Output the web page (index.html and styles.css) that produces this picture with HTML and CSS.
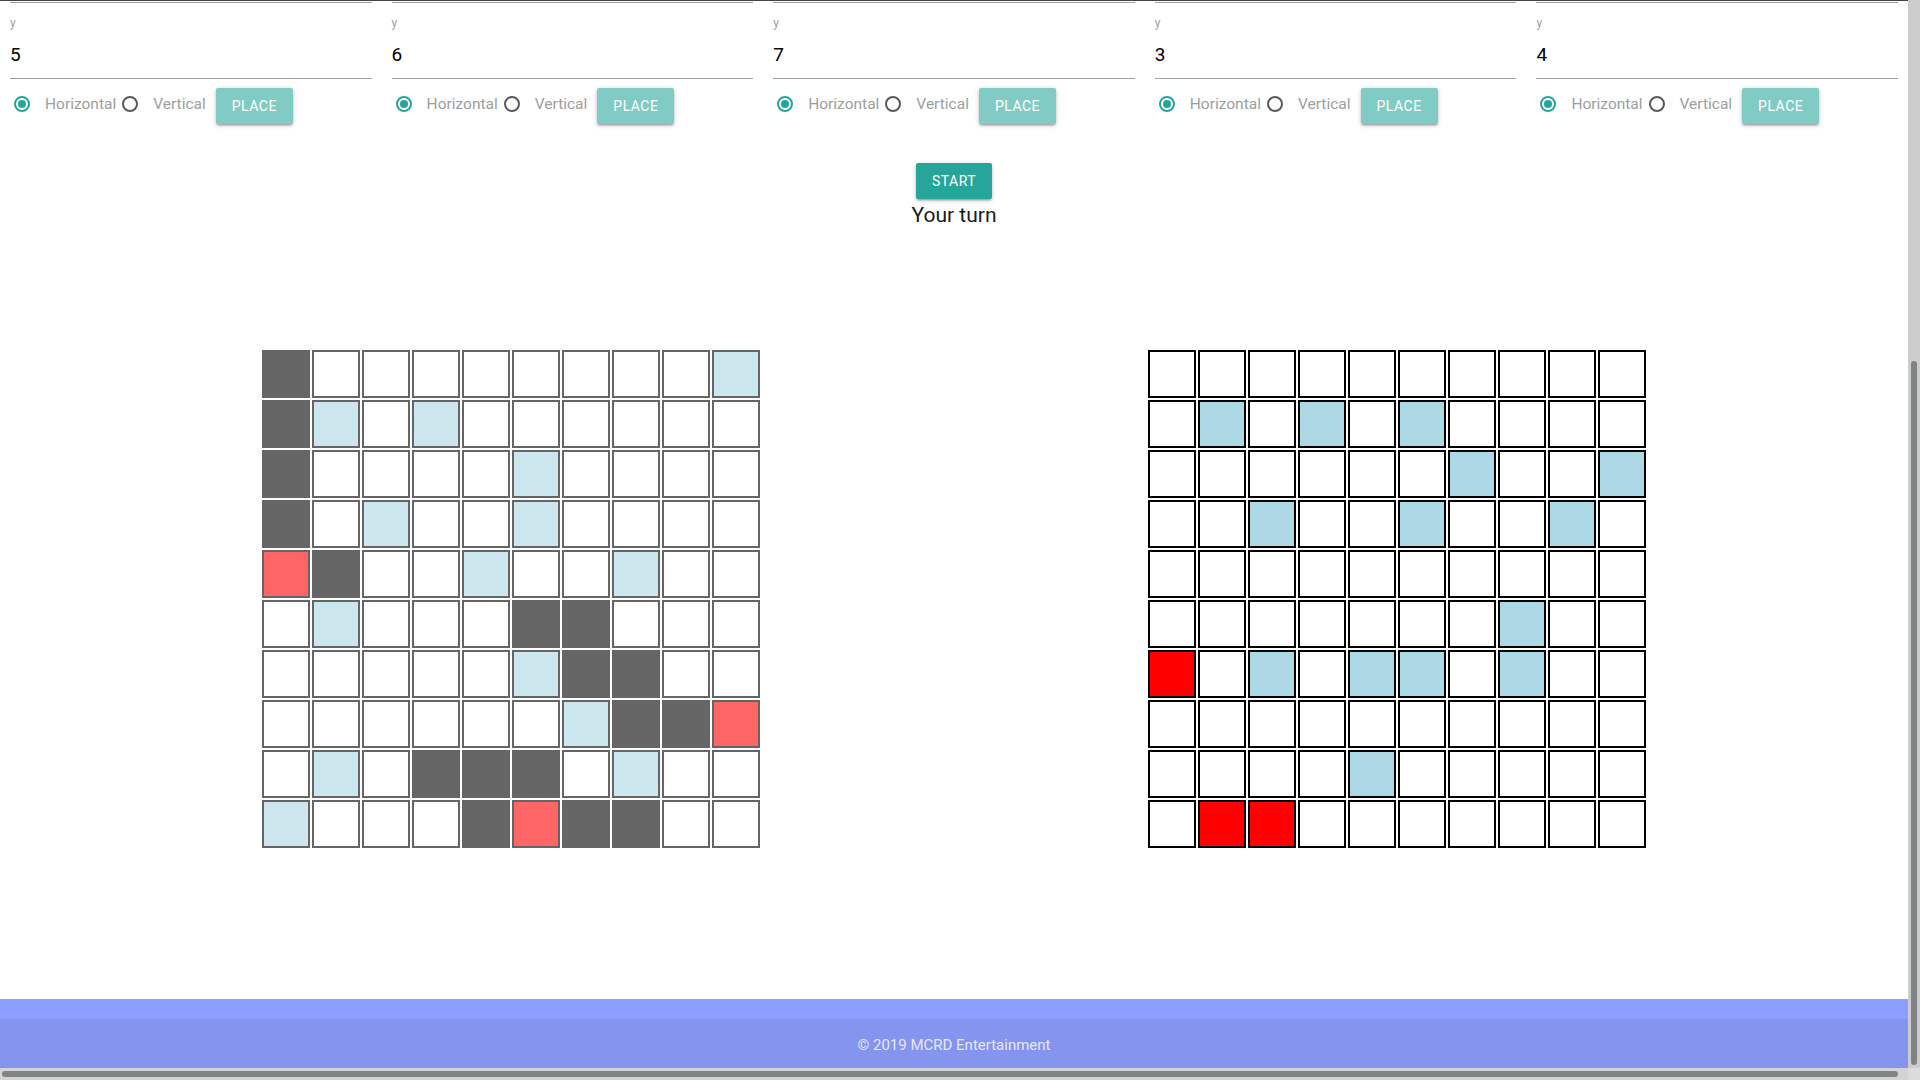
FILE: index.html
```html
<!DOCTYPE html>
<html lang="en">
<head>
<meta charset="utf-8">
<title>Battleship</title>
<link rel="stylesheet" href="styles.css">
</head>
<body>
<div class="page">
  <section class="forms">
    <div class="col">
      <div class="prevline"></div>
      <div class="lbl">y</div>
      <div class="val">5</div>
      <div class="opts">
        <label class="radio on"><span class="dot"></span>Horizontal</label>
        <label class="radio"><span class="dot"></span>Vertical</label>
        <button class="btn place">Place</button>
      </div>
    </div>
    <div class="col">
      <div class="prevline"></div>
      <div class="lbl">y</div>
      <div class="val">6</div>
      <div class="opts">
        <label class="radio on"><span class="dot"></span>Horizontal</label>
        <label class="radio"><span class="dot"></span>Vertical</label>
        <button class="btn place">Place</button>
      </div>
    </div>
    <div class="col">
      <div class="prevline"></div>
      <div class="lbl">y</div>
      <div class="val">7</div>
      <div class="opts">
        <label class="radio on"><span class="dot"></span>Horizontal</label>
        <label class="radio"><span class="dot"></span>Vertical</label>
        <button class="btn place">Place</button>
      </div>
    </div>
    <div class="col">
      <div class="prevline"></div>
      <div class="lbl">y</div>
      <div class="val">3</div>
      <div class="opts">
        <label class="radio on"><span class="dot"></span>Horizontal</label>
        <label class="radio"><span class="dot"></span>Vertical</label>
        <button class="btn place">Place</button>
      </div>
    </div>
    <div class="col">
      <div class="prevline"></div>
      <div class="lbl">y</div>
      <div class="val">4</div>
      <div class="opts">
        <label class="radio on"><span class="dot"></span>Horizontal</label>
        <label class="radio"><span class="dot"></span>Vertical</label>
        <button class="btn place">Place</button>
      </div>
    </div>
  </section>

  <div class="controls">
    <button class="btn start">Start</button>
    <div class="turn">Your turn</div>
  </div>

  <section class="boards">
    <div class="board own">
      <div class="c s"></div><div class="c"></div><div class="c"></div><div class="c"></div><div class="c"></div><div class="c"></div><div class="c"></div><div class="c"></div><div class="c"></div><div class="c m"></div>
      <div class="c s"></div><div class="c m"></div><div class="c"></div><div class="c m"></div><div class="c"></div><div class="c"></div><div class="c"></div><div class="c"></div><div class="c"></div><div class="c"></div>
      <div class="c s"></div><div class="c"></div><div class="c"></div><div class="c"></div><div class="c"></div><div class="c m"></div><div class="c"></div><div class="c"></div><div class="c"></div><div class="c"></div>
      <div class="c s"></div><div class="c"></div><div class="c m"></div><div class="c"></div><div class="c"></div><div class="c m"></div><div class="c"></div><div class="c"></div><div class="c"></div><div class="c"></div>
      <div class="c x"></div><div class="c s"></div><div class="c"></div><div class="c"></div><div class="c m"></div><div class="c"></div><div class="c"></div><div class="c m"></div><div class="c"></div><div class="c"></div>
      <div class="c"></div><div class="c m"></div><div class="c"></div><div class="c"></div><div class="c"></div><div class="c s"></div><div class="c s"></div><div class="c"></div><div class="c"></div><div class="c"></div>
      <div class="c"></div><div class="c"></div><div class="c"></div><div class="c"></div><div class="c"></div><div class="c m"></div><div class="c s"></div><div class="c s"></div><div class="c"></div><div class="c"></div>
      <div class="c"></div><div class="c"></div><div class="c"></div><div class="c"></div><div class="c"></div><div class="c"></div><div class="c m"></div><div class="c s"></div><div class="c s"></div><div class="c x"></div>
      <div class="c"></div><div class="c m"></div><div class="c"></div><div class="c s"></div><div class="c s"></div><div class="c s"></div><div class="c"></div><div class="c m"></div><div class="c"></div><div class="c"></div>
      <div class="c m"></div><div class="c"></div><div class="c"></div><div class="c"></div><div class="c s"></div><div class="c x"></div><div class="c s"></div><div class="c s"></div><div class="c"></div><div class="c"></div>
    </div>
    <div class="board enemy">
      <div class="c"></div><div class="c"></div><div class="c"></div><div class="c"></div><div class="c"></div><div class="c"></div><div class="c"></div><div class="c"></div><div class="c"></div><div class="c"></div>
      <div class="c"></div><div class="c m"></div><div class="c"></div><div class="c m"></div><div class="c"></div><div class="c m"></div><div class="c"></div><div class="c"></div><div class="c"></div><div class="c"></div>
      <div class="c"></div><div class="c"></div><div class="c"></div><div class="c"></div><div class="c"></div><div class="c"></div><div class="c m"></div><div class="c"></div><div class="c"></div><div class="c m"></div>
      <div class="c"></div><div class="c"></div><div class="c m"></div><div class="c"></div><div class="c"></div><div class="c m"></div><div class="c"></div><div class="c"></div><div class="c m"></div><div class="c"></div>
      <div class="c"></div><div class="c"></div><div class="c"></div><div class="c"></div><div class="c"></div><div class="c"></div><div class="c"></div><div class="c"></div><div class="c"></div><div class="c"></div>
      <div class="c"></div><div class="c"></div><div class="c"></div><div class="c"></div><div class="c"></div><div class="c"></div><div class="c"></div><div class="c m"></div><div class="c"></div><div class="c"></div>
      <div class="c x"></div><div class="c"></div><div class="c m"></div><div class="c"></div><div class="c m"></div><div class="c m"></div><div class="c"></div><div class="c m"></div><div class="c"></div><div class="c"></div>
      <div class="c"></div><div class="c"></div><div class="c"></div><div class="c"></div><div class="c"></div><div class="c"></div><div class="c"></div><div class="c"></div><div class="c"></div><div class="c"></div>
      <div class="c"></div><div class="c"></div><div class="c"></div><div class="c"></div><div class="c m"></div><div class="c"></div><div class="c"></div><div class="c"></div><div class="c"></div><div class="c"></div>
      <div class="c"></div><div class="c x"></div><div class="c x"></div><div class="c"></div><div class="c"></div><div class="c"></div><div class="c"></div><div class="c"></div><div class="c"></div><div class="c"></div>
    </div>
  </section>

  <footer class="footer">
    <div class="copyright">© 2019 MCRD Entertainment</div>
  </footer>
</div>

<div class="vscroll"><div class="vthumb"></div></div>
<div class="hscroll"><div class="hthumb"></div></div>
<div class="corner"></div>
</body>
</html>
```

FILE: styles.css
```css
html, body {
  margin: 0;
  padding: 0;
  background: #fff;
  overflow: hidden;
}

body {
  font-family: Roboto, "Liberation Sans", sans-serif;
  color: rgba(0, 0, 0, 0.87);
}

.page {
  width: 1908px;
  height: 1068px;
  overflow: hidden;
  display: flex;
  flex-direction: column;
}

/* ---------- placement forms ---------- */
.forms {
  display: grid;
  grid-template-columns: repeat(5, 1fr);
  border-top: 1px solid #444;
}

.col {
  padding: 0 10px;
  display: flex;
  flex-direction: column;
}

.prevline {
  height: 1px;
  border-bottom: 1px solid #9e9e9e;
}

.lbl {
  margin-top: 13px;
  height: 14px;
  line-height: 14px;
  font-size: 12px;
  color: #9e9e9e;
}

.val {
  margin-top: 0;
  height: 48px;
  line-height: 50px;
  font-size: 19px;
  color: #000;
  border-bottom: 1px solid #9e9e9e;
}

.opts {
  margin-top: 8px;
  height: 36px;
  display: flex;
  align-items: center;
}

.radio {
  position: relative;
  padding-left: 35px;
  margin-bottom: 2px;
  font-size: 15.5px;
  color: #9e9e9e;
  line-height: 25px;
  display: inline-flex;
  align-items: center;
}

.radio + .radio {
  margin-left: 2px;
}

.dot {
  position: absolute;
  left: 4px;
  top: 4px;
  width: 16px;
  height: 16px;
  box-sizing: border-box;
  border: 2px solid #5a5a5a;
  border-radius: 50%;
}

.radio.on .dot {
  border-color: #26a69a;
}

.radio.on .dot::after {
  content: "";
  position: absolute;
  left: 2px;
  top: 2px;
  width: 8px;
  height: 8px;
  border-radius: 50%;
  background: #26a69a;
}

.btn {
  height: 36px;
  line-height: 36px;
  padding: 0 16px;
  border: none;
  border-radius: 2px;
  font-family: Roboto, "Liberation Sans", sans-serif;
  font-size: 14px;
  letter-spacing: 0.5px;
  text-transform: uppercase;
  color: #fff;
  box-shadow: 0 2px 2px 0 rgba(0,0,0,0.14), 0 3px 1px -2px rgba(0,0,0,0.12), 0 1px 5px 0 rgba(0,0,0,0.2);
}

.place {
  margin-left: 10px;
  margin-top: 1px;
  background: #80cbc4;
}

/* ---------- controls ---------- */
.controls {
  margin-top: 40px;
  display: flex;
  flex-direction: column;
  align-items: center;
}

.start {
  background: #26a69a;
}

.turn {
  margin-top: 1px;
  font-size: 21px;
  line-height: 30px;
  color: #1a1a1a;
}

/* ---------- boards ---------- */
.boards {
  margin-top: 120px;
  padding-left: 262px;
  display: flex;
  gap: 388px;
}

.board {
  display: grid;
  grid-template-columns: repeat(10, 48px);
  grid-auto-rows: 48px;
  gap: 2px;
}

.board.own {
  opacity: 0.6;
}

.c {
  box-sizing: border-box;
  border: 2px solid #000;
  background: #fff;
}

.c.s {
  background: #000;
}

.c.m {
  background: #add8e6;
}

.c.x {
  background: #ff0000;
}

/* ---------- footer ---------- */
.footer {
  margin-top: 151px;
  padding-top: 20px;
  background: #8c9eff;
  flex: 1 0 auto;
  display: flex;
  flex-direction: column;
}

.copyright {
  flex: 1 0 auto;
  background: rgba(51, 51, 51, 0.08);
  padding-top: 15px;
  line-height: 22px;
  font-size: 15px;
  text-align: center;
  color: rgba(255, 255, 255, 0.8);
}

/* ---------- fake browser scrollbars (overlay) ---------- */
.vscroll {
  position: fixed;
  top: 0;
  right: 0;
  width: 12px;
  height: 1068px;
  background: #cdcdcd;
}

.vthumb {
  position: absolute;
  left: 3px;
  top: 361px;
  width: 6px;
  height: 704px;
  border-radius: 3px;
  background: #7f8383;
}

.hscroll {
  position: fixed;
  left: 0;
  bottom: 0;
  width: 1908px;
  height: 12px;
  background: #d3d3d3;
}

.hthumb {
  position: absolute;
  left: 2px;
  top: 3px;
  width: 1896px;
  height: 6px;
  border-radius: 3px;
  background: #7f8383;
}

.corner {
  position: fixed;
  right: 0;
  bottom: 0;
  width: 12px;
  height: 12px;
  background: #dcdcdc;
}
```
